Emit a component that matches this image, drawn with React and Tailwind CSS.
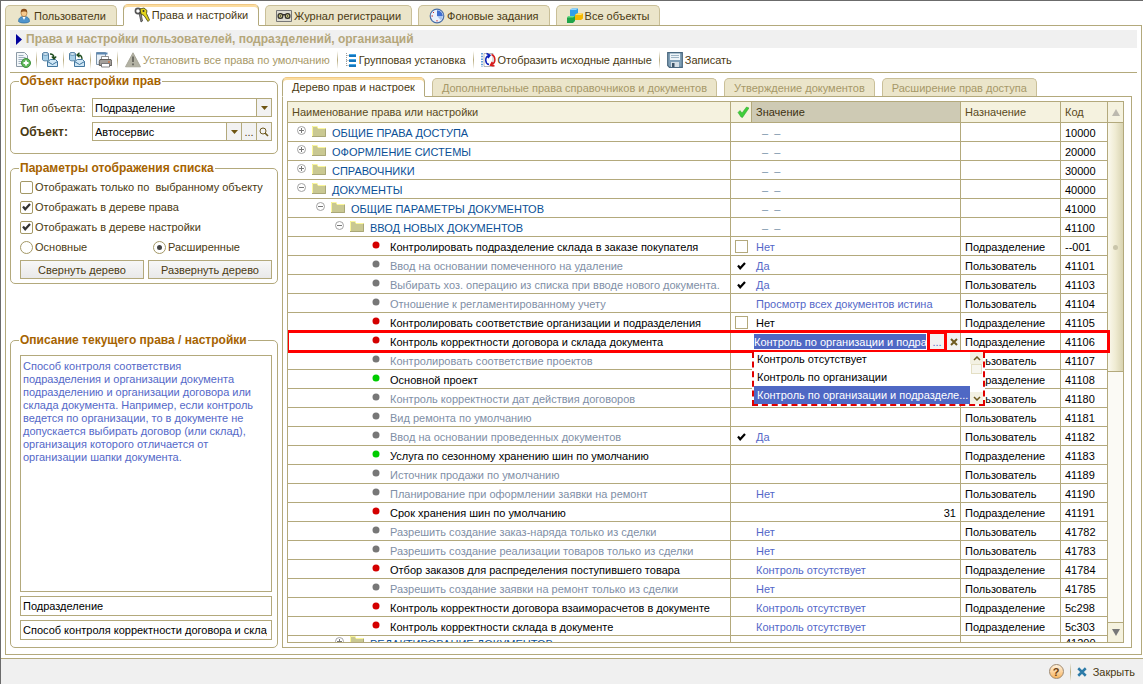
import React, { useState } from 'react';
import clsx from 'clsx';

const ROWS = [
  { level: 0, open: false, name: 'ОБЩИЕ ПРАВА ДОСТУПА', code: '10000' },
  { level: 0, open: false, name: 'ОФОРМЛЕНИЕ СИСТЕМЫ', code: '20000' },
  { level: 0, open: false, name: 'СПРАВОЧНИКИ', code: '30000' },
  { level: 0, open: true, name: 'ДОКУМЕНТЫ', code: '40000' },
  { level: 1, open: true, name: 'ОБЩИЕ ПАРАМЕТРЫ ДОКУМЕНТОВ', code: '41000' },
  { level: 2, open: true, name: 'ВВОД НОВЫХ ДОКУМЕНТОВ', code: '41100' },
  { dot: 'red', name: 'Контролировать подразделение склада в заказе покупателя', check: false, value: 'Нет', target: 'Подразделение', code: '--001' },
  { dot: 'gray', name: 'Ввод на основании помеченного на удаление', check: true, value: 'Да', target: 'Пользователь', code: '41101' },
  { dot: 'gray', name: 'Выбирать хоз. операцию из списка при вводе нового документа.', check: true, value: 'Да', target: 'Пользователь', code: '41103' },
  { dot: 'gray', name: 'Отношение к регламентированному учету', value: 'Просмотр всех документов истина', target: 'Пользователь', code: '41104' },
  { dot: 'red', name: 'Контролировать соответствие организации и подразделения', check: false, value: 'Нет', dark: true, target: 'Подразделение', code: '41105' },
  { dot: 'red', name: 'Контроль корректности договора и склада документа', editing: true, target: 'Подразделение', code: '41106' },
  { dot: 'gray', name: 'Контролировать соответствие проектов', target: 'Пользователь', code: '41107' },
  { dot: 'green', name: 'Основной проект', target: 'Подразделение', code: '41108' },
  { dot: 'gray', name: 'Контроль корректности дат действия договоров', target: 'Пользователь', code: '41180' },
  { dot: 'gray', name: 'Вид ремонта по умолчанию', target: 'Пользователь', code: '41181' },
  { dot: 'gray', name: 'Ввод на основании проведенных документов', check: true, value: 'Да', target: 'Пользователь', code: '41182' },
  { dot: 'green', name: 'Услуга по сезонному хранению шин по умолчанию', target: 'Подразделение', code: '41183' },
  { dot: 'gray', name: 'Источник продажи по умолчанию', target: 'Пользователь', code: '41189' },
  { dot: 'gray', name: 'Планирование при оформлении заявки на ремонт', value: 'Нет', target: 'Пользователь', code: '41190' },
  { dot: 'red', name: 'Срок хранения шин по умолчанию', value: '31', dark: true, number: true, target: 'Подразделение', code: '41191' },
  { dot: 'gray', name: 'Разрешить создание заказ-наряда только из сделки', value: 'Нет', target: 'Пользователь', code: '41782' },
  { dot: 'gray', name: 'Разрешить создание реализации товаров только из сделки', value: 'Нет', target: 'Пользователь', code: '41783' },
  { dot: 'red', name: 'Отбор заказов для распределения поступившего товара', value: 'Контроль отсутствует', target: 'Подразделение', code: '41784' },
  { dot: 'gray', name: 'Разрешить создание заявки на ремонт только из сделки', value: 'Нет', target: 'Пользователь', code: '41785' },
  { dot: 'red', name: 'Контроль корректности договора взаиморасчетов в документе', value: 'Контроль отсутствует', target: 'Подразделение', code: '5с298' },
  { dot: 'red', name: 'Контроль корректности склада в документе', value: 'Контроль отсутствует', target: 'Подразделение', code: '5с303' },
  { level: 2, open: false, last: true, name: 'РЕДАКТИРОВАНИЕ ДОКУМЕНТОВ', code: '41200' },
];

const DOTS = { red: '#d40000', gray: '#777777', green: '#00cc00' };
const LEVEL_PAD = ['pl-[9px]', 'pl-[28px]', 'pl-[47px]'];
const DESCRIPTION =
  'Способ контроля соответствия подразделения и организации документа подразделению и организации договора или склада документа. Например, если контроль ведется по организации, то в документе не допускается выбирать договор (или склад), организация которого отличается от организации шапки документа.';

/* ---------- icons ---------- */

function Icon({ children, w = 16, h = 16, className }) {
  return (
    <svg width={w} height={h} viewBox={`0 0 ${w} ${h}`} className={clsx('shrink-0', className)} aria-hidden="true">
      {children}
    </svg>
  );
}

const UserIcon = () => (
  <Icon>
    <path d="M2.500 13.500c0-3 1.500-5 5.500-5s5.500 2 5.500 5c-2 2-9 2-11 0z" fill="#4f94cc" stroke="#2d6b9e" strokeWidth=".7" />
    <path d="M6.500 9l1.500 3 1.500-3z" fill="#fff" />
    <ellipse cx="8" cy="5" rx="3" ry="3.600" fill="#f6c98d" stroke="#a86a28" strokeWidth=".6" />
    <path d="M4.800 4.600C4.600 1.800 6 .8 8 .8s3.400 1 3.200 3.800C10.200 3.200 6.500 3 4.800 4.600z" fill="#8a4f1c" />
  </Icon>
);

const KeysIcon = () => (
  <Icon>
    <circle cx="4" cy="4" r="2.600" fill="none" stroke="#555" strokeWidth="1.600" />
    <path d="M5 6l2 9 1.500-1L7 6z" fill="#888" stroke="#333" strokeWidth=".7" />
    <path d="M6 2l4-1 3 2.500-.5 3L15.500 13l-1.500 1.500-4-6L7 7z" fill="#e2d31c" stroke="#3b3b10" strokeWidth=".8" />
    <circle cx="9.500" cy="4" r="1" fill="#333" />
  </Icon>
);

const TapeIcon = () => (
  <Icon>
    <path d="M.5 2.500h15v11H.5z" fill="#dedcd2" stroke="#777" />
    <rect x="1.500" y="5" width="5.800" height="6" rx="2.500" fill="#34322c" />
    <rect x="8.700" y="5" width="5.800" height="6" rx="2.500" fill="#34322c" />
    <path d="M5 6h6v1.500H5z" fill="#34322c" />
    <circle cx="4.400" cy="8" r="1.700" fill="#d8d38a" />
    <circle cx="11.600" cy="8" r="1.700" fill="#d8d38a" />
    <circle cx="4.400" cy="8" r=".7" fill="#222" />
    <circle cx="11.600" cy="8" r=".7" fill="#222" />
  </Icon>
);

const ClockIcon = () => (
  <Icon>
    <circle cx="8" cy="8" r="6.800" fill="#eaf2fc" stroke="#4a6fa8" strokeWidth="1.200" />
    <path d="M8 8V2.200A5.800 5.800 0 0 1 13.800 8z" fill="#3f6fd0" />
    <path d="M8 8h5.800A5.800 5.800 0 0 1 12 12.200z" fill="#a8c4ee" />
    <path d="M2.500 8h1.500M8 12v1.500M4 4l1 1" stroke="#c33" />
  </Icon>
);

const CubesIcon = () => (
  <Icon>
    <path d="M3 2l2-1.500h6v6L9 8H3z" fill="#2f9fe8" />
    <path d="M3 2l2-1.500h6L9 2z" fill="#8fd4ff" />
    <path d="M8 7l2-1.500h6v5L14 12H8z" fill="#f5b800" />
    <path d="M8 7l2-1.500h6L14 7z" fill="#ffe06a" />
    <path d="M0 9.500L1.500 8H8v5l-2 2H0z" fill="#1fa54a" />
    <path d="M0 9.500L1.500 8H8L6 9.500z" fill="#6fe08a" />
  </Icon>
);

const AddIcon = () => (
  <Icon>
    <path d="M1.500.5h8l3 3v11h-11z" fill="#f3f7fa" stroke="#8c9aa6" />
    <path d="M3.500 3.500h5M3.500 5.500h7M3.500 7.500h6M3.500 9.500h4M3.500 11.500h3" stroke="#9fb0bf" />
    <circle cx="11" cy="11" r="4.500" fill="#5fb85a" stroke="#3f8f3c" />
    <path d="M11 8.500v5M8.500 11h5" stroke="#fff" strokeWidth="1.800" />
  </Icon>
);

function TransferIcon({ back }) {
  return (
    <Icon>
      <path d="M.5 2c0-2 6-2 6 0v5.500c0 1.800-6 1.800-6 0z" fill="#a9d0e8" stroke="#3d6f96" strokeWidth=".9" />
      <ellipse cx="3.500" cy="2" rx="3" ry="1.300" fill="#e3f3fb" stroke="#3d6f96" strokeWidth=".7" />
      <path d="M5.500 9.500l3-2h5l2 2v5h-10z" fill="#cfe6f5" stroke="#2f6893" strokeWidth=".9" />
      <path d="M5.500 9.500l5 3 5-3" fill="none" stroke="#2f6893" strokeWidth=".9" />
      {back ? (
        <path d="M13 7c0-3-1-4-4-4M10.500.8L8 3l2.500 2.200" fill="none" stroke="#1f4d1f" strokeWidth="1.300" />
      ) : (
        <path d="M8 2c3 0 4 1 4 4M9.800 4.500L12 7l2.200-2.500" fill="none" stroke="#1f4d1f" strokeWidth="1.300" />
      )}
    </Icon>
  );
}

const PrintIcon = () => (
  <Icon>
    <path d="M.5.5h9v12h-9z" fill="#e8f0f7" stroke="#7d95ab" />
    <path d="M.5 1.500h11" stroke="#5b86b0" strokeWidth="2" />
    <path d="M5.500 4.500h7V9h-7z" fill="#fff" stroke="#777" strokeWidth=".8" />
    <path d="M4 7.500h11l.7 2v4H3.300v-4z" fill="#a4a09b" stroke="#55514d" strokeWidth=".9" />
    <path d="M5.500 11.500h8v3.500h-8z" fill="#fff" stroke="#666" strokeWidth=".8" />
    <path d="M12 10h2" stroke="#e06020" />
  </Icon>
);

const WarnIcon = () => (
  <Icon>
    <path d="M8 .8l7.500 14H.5z" fill="#b3b2a4" stroke="#a5a495" strokeWidth=".9" strokeLinejoin="round" />
    <path d="M8 4.500V10M8 11.500v1.800" stroke="#6e6d64" strokeWidth="2" />
  </Icon>
);

const TreeIcon = () => (
  <Icon w={12} h={14}>
    <path d="M1.500 0v13M1.500 2.500h3M1.500 7.500h3M1.500 12.500h3" stroke="#9a9a9a" strokeDasharray="1 1" fill="none" />
    <path d="M4 1h7v3H4zM4 6h7v3H4zM4 11h7v3H4z" fill="#1476bd" />
    <path d="M4 1h7v1H4zM4 6h7v1H4zM4 11h7v1H4z" fill="#49a8e6" />
  </Icon>
);

const RefreshIcon = () => (
  <Icon w={15}>
    <path d="M3 1.500h9v13H3z" fill="#fff" stroke="#999" strokeWidth=".7" />
    <path d="M1 1v14" stroke="#3a86d0" strokeWidth="1.500" strokeDasharray="1.500 1.200" />
    <path d="M8 12.500C3.800 11.500 3.500 5 8 3.500M5.500 1.500L9 3.200 7 6.200" fill="none" stroke="#0a1fb8" strokeWidth="1.500" />
    <path d="M10.500 2.500c4.500 2 4.500 8.500 0 10M13.500 14l-4-.8 1.800-3.400" fill="none" stroke="#d81a1a" strokeWidth="1.500" />
  </Icon>
);

const SaveIcon = () => (
  <Icon>
    <path d="M.7.700h14.600v14.600H2.500L.7 13.500z" fill="#7f9fb6" stroke="#4a687f" strokeWidth="1.200" />
    <path d="M3 1.500h10V8H3z" fill="#eef4f8" />
    <path d="M4 3.500h8M4 5.500h8" stroke="#9eb4c4" />
    <path d="M4 10h8v5H4z" fill="#d5dfe6" />
    <path d="M5 11h2.500v4H5z" fill="#3d5468" />
  </Icon>
);

const FolderIcon = () => (
  <Icon w={14} h={12}>
    <path d="M0 1h5l1 2h8v9H0z" fill="#c9c892" />
    <path d="M.5 11V1.500h4.500l1 2h7.500" fill="none" stroke="#fbf79a" />
    <path d="M0 11.500h13.500V4" fill="none" stroke="#a9a777" />
  </Icon>
);

function ExpanderIcon({ open }) {
  return (
    <Icon w={9} h={9}>
      <circle cx="4.500" cy="4.500" r="4" fill="#fff" stroke="#a3a3a3" />
      <path d={open ? 'M2 4.500h5' : 'M2 4.500h5M4.500 2v5'} stroke="#777" />
    </Icon>
  );
}

const TickIcon = ({ className }) => (
  <Icon w={9} h={8} className={className}>
    <path d="M1 3.500l2.200 2.700L8 1" fill="none" stroke="currentColor" strokeWidth="2.200" />
  </Icon>
);

const GreenCheckIcon = () => (
  <Icon w={12} h={12}>
    <path d="M1 6.500l2-2L5 7l4.500-6L12 2 5.500 11.500 4 11z" fill="#3fce3a" stroke="#2a9f2a" strokeWidth=".5" />
  </Icon>
);

const DownIcon = () => (
  <Icon w={7} h={4}>
    <path d="M0 0h7L3.500 4z" fill="#6e5512" />
  </Icon>
);

const LensIcon = () => (
  <Icon w={10} h={10}>
    <circle cx="4" cy="4" r="3" fill="none" stroke="#6e5a20" />
    <path d="M6 6l3 3" stroke="#6e5a20" strokeWidth="1.600" />
  </Icon>
);

const CrossIcon = ({ color, size = 8 }) => (
  <svg width={size} height={size} viewBox="0 0 8 8" className="shrink-0" aria-hidden="true">
    <path d="M1 1l6 6M7 1L1 7" stroke={color} strokeWidth="2" />
  </svg>
);

const ChevronIcon = ({ up }) => (
  <Icon w={8} h={5}>
    <path d={up ? 'M1 4l3-3 3 3' : 'M1 1l3 3 3-3'} fill="none" stroke="#6e5a20" strokeWidth="1.500" />
  </Icon>
);

/* ---------- small parts ---------- */

function Tab({ active, dim, icon, small, children }) {
  return (
    <button
      type="button"
      role="tab"
      aria-selected={!!active}
      className={clsx(
        'flex items-center gap-[2px] whitespace-nowrap rounded-t-[5px] border',
        small ? 'h-[18px] px-[9px]' : 'h-5 px-[10px]',
        active
          ? 'relative z-10 -mb-px box-content border-[#b3a97c] border-b-white border-t-[#f0c884] bg-white shadow-[inset_0_2px_0_#fbdc9f]'
          : 'border-b-0 border-[#c9bf98] bg-[#ebe5ca]',
        dim ? 'text-[#a69868]' : 'text-[#4a3a12]'
      )}
    >
      {icon}
      <span>{children}</span>
    </button>
  );
}

function ToolButton({ icon, label, children, disabled }) {
  return (
    <button
      type="button"
      aria-label={label}
      disabled={disabled}
      className={clsx(
        'flex h-5 items-center gap-[2px] whitespace-nowrap',
        children && 'px-[2px]',
        disabled ? 'text-[#a69868]' : 'text-[#4a3a12]'
      )}
    >
      {icon}
      {children && <span>{children}</span>}
    </button>
  );
}

const Separator = () => <span className="h-[18px] w-px bg-linear-to-b from-transparent via-[#b8ac80] to-transparent" />;

function Group({ title, className, children }) {
  return (
    <fieldset className={clsx('min-w-0 rounded-[5px] border border-[#b3a97c] pr-[5px] pl-[9px]', className)}>
      <legend className="-ml-px whitespace-nowrap px-px text-xs leading-[14px] font-bold text-[#a66300]">{title}</legend>
      {children}
    </fieldset>
  );
}

function CheckOption({ defaultChecked, children }) {
  return (
    <label className="flex h-5 items-center gap-[2px] whitespace-pre">
      <span className="grid place-items-center">
        <input
          type="checkbox"
          defaultChecked={defaultChecked}
          className="peer col-start-1 row-start-1 size-[13px] appearance-none rounded-[2px] border border-[#a39866] bg-white"
        />
        <TickIcon className="pointer-events-none col-start-1 row-start-1 hidden text-[#333] peer-checked:block" />
      </span>
      {children}
    </label>
  );
}

function RadioOption({ defaultChecked, children }) {
  return (
    <label className="flex h-5 flex-1 items-center gap-[2px]">
      <span className="grid place-items-center">
        <input
          type="radio"
          name="detail"
          defaultChecked={defaultChecked}
          className="peer col-start-1 row-start-1 size-[13px] appearance-none rounded-full border border-[#a39866] bg-white"
        />
        <span className="pointer-events-none col-start-1 row-start-1 hidden size-[5px] rounded-full bg-[#444] peer-checked:block" />
      </span>
      {children}
    </label>
  );
}

const PushButton = ({ children }) => (
  <button type="button" className="h-[19px] flex-1 border border-[#b3a97c] bg-linear-to-b from-[#f7f7f7] to-[#e9e9e9] whitespace-nowrap">
    {children}
  </button>
);

const FieldButton = ({ label, children }) => (
  <button type="button" aria-label={label} className="flex w-[15px] shrink-0 items-center justify-center border-l border-[#b3a97c] bg-[#f2f2f2]">
    {children}
  </button>
);

/* ---------- value editor with its drop-down list ---------- */

function ValueEditor() {
  const [picked, setPicked] = useState(2);
  const options = ['Контроль отсутствует', 'Контроль по организации', 'Контроль по организации и подразделе...'];

  return (
    <div className="relative flex h-[17px] items-stretch pl-[2px]">
      <input
        type="text"
        aria-label="Значение"
        defaultValue="Контроль по организации и подразделению"
        className="my-px min-w-0 flex-1 bg-[#4f68c4] text-white"
      />
      <button type="button" aria-label="Выбрать" className="-my-[2px] ml-px w-5 border-[3px] border-[#f00] bg-[#f2f2f2] leading-3">
        ...
      </button>
      <button type="button" aria-label="Очистить" className="flex w-[13px] items-center justify-center bg-[#f2f2f2]">
        <CrossIcon color="#6e5a20" />
      </button>

      <div className="absolute top-[19px] left-0 z-20 flex w-[233px] border-2 border-t-0 border-dashed border-[#e00000] bg-white">
        <ul className="min-w-0 flex-1">
          {options.map((o, i) => (
            <li key={o} className="first:-mt-[2px]">
              <button
                type="button"
                onClick={() => setPicked(i)}
                className={clsx('block h-[18px] w-full whitespace-nowrap pl-[3px] text-left', picked === i ? 'bg-[#4f68c4] text-white' : 'text-black')}
              >
                {o}
              </button>
            </li>
          ))}
        </ul>
        <div className="flex w-[13px] flex-col items-center justify-between bg-white">
          <span className="flex h-3 w-full items-center justify-center bg-[#f3f1e3]"><ChevronIcon up /></span>
          <span className="mb-auto h-[10px] w-[11px] border border-[#e4dfc4] bg-[#f7f6ef]" />
          <span className="flex h-3 w-full items-center justify-center bg-[#f3f1e3]"><ChevronIcon /></span>
        </div>
      </div>
    </div>
  );
}

function TreeRow({ row }) {
  const folder = row.level !== undefined;
  return (
    <tr
      className={clsx(
        'h-[19px] *:border-b *:border-[#b3a97c] *:p-0',
        row.last ? '*:align-top' : '*:pt-px',
        row.editing && 'relative z-10 outline-[3px] -outline-offset-1 outline-[#f00]'
      )}
    >
      <td className="border-r">
        {folder ? (
          <div className={clsx('flex items-center', row.last ? 'h-[14px]' : 'h-[17px]', LEVEL_PAD[row.level])}>
            <span className="-mt-1"><ExpanderIcon open={row.open} /></span>
            <span className="-mt-1 mr-[6px] ml-[6px]"><FolderIcon /></span>
            <span className="pt-px whitespace-nowrap text-[#0a4f96]">{row.name}</span>
          </div>
        ) : (
          <div className="flex h-[17px] items-center pl-[84px]">
            <Icon w={8} h={8} className="-mt-1">
              <circle cx="4" cy="4" r="3.500" fill={DOTS[row.dot]} />
            </Icon>
            <span className={clsx('pl-[10px] whitespace-nowrap', row.dot === 'gray' ? 'text-[#7f8fa6]' : 'text-black')}>{row.name}</span>
          </div>
        )}
      </td>
      <td className="!pl-1 align-middle">
        {row.check === true && <TickIcon className="ml-[2px] text-black" />}
        {row.check === false && (
          <input type="checkbox" aria-label={row.name} className="block size-[13px] appearance-none border border-[#b3a97c] bg-white" />
        )}
      </td>
      <td className={clsx('border-r', !row.editing && '!px-1', row.number && 'text-right', row.dark ? 'text-black' : 'text-[#5468c8]')}>
        {folder && !row.last && <span className="pl-[6px] whitespace-pre text-[#7892a8]">–  –</span>}
        {row.editing ? <ValueEditor /> : row.value}
      </td>
      <td className="border-r !pl-1 text-black">{row.target}</td>
      <td className="border-r !pl-1 text-black">{row.code}</td>
    </tr>
  );
}

function RightsTable() {
  return (
    <div className="flex min-h-0 flex-1 overflow-hidden border border-[#b3a97c]">
      <div className="min-w-0 flex-1">
        <table className="w-full table-fixed border-separate border-spacing-0">
          <colgroup>
            <col />
            <col className="w-[21px]" />
            <col className="w-[209px]" />
            <col className="w-[100px]" />
            <col className="w-[47px]" />
          </colgroup>
          <thead>
            <tr className="h-[21px] bg-[#f5f2df] text-left text-[#5a4a1c] *:border-r *:border-b *:border-[#b3a97c] *:p-0 *:font-normal">
              <th className="!pl-1">Наименование права или настройки</th>
              <th className="!pl-[6px]" aria-label="Отметка"><GreenCheckIcon /></th>
              <th className="bg-[#cecab4] !pl-1 text-[#3c3010]">Значение</th>
              <th className="!pl-1">Назначение</th>
              <th className="!pl-1">Код</th>
            </tr>
          </thead>
          <tbody>
            {ROWS.map((row) => <TreeRow key={row.code} row={row} />)}
          </tbody>
        </table>
      </div>

      {/* scroll bar */}
      <div className="flex w-[15px] flex-col bg-[#fbfaf5]">
        <button type="button" aria-label="Вверх" className="flex h-[21px] items-center justify-center border-b border-[#b3a97c] bg-[#f5f2df]">
          <Icon w={8} h={7}><path d="M0 7h8L4 0z" fill="#bcb9ae" /></Icon>
        </button>
        <div className="flex h-[249px] items-center justify-center border-b border-[#b3a97c] bg-linear-to-r from-[#fbf9ee] via-[#efebd2] to-[#d9d4b2]">
          <span className="size-[5px] rounded-full bg-[#c9c5aa]" />
        </div>
        <button type="button" aria-label="Вниз" className="mt-auto flex h-5 items-center justify-center border-t border-[#b3a97c] bg-[#f5f2df]">
          <Icon w={8} h={7}><path d="M0 0h8L4 7z" fill="#777" /></Icon>
        </button>
      </div>
    </div>
  );
}

function LeftColumn() {
  const box = 'w-full border border-[#b3a97c] bg-white pl-[2px]';
  return (
    <div className="flex w-[268px] shrink-0 flex-col pt-px">
      <Group title="Объект настройки прав" className="pb-3">
        <div className="grid grid-cols-[72px_minmax(0,1fr)] items-center gap-y-[5px] pt-[10px]">
          <label htmlFor="kind">Тип объекта:</label>
          <div className="flex h-[19px] border border-[#b3a97c]">
            <select id="kind" className="min-w-0 flex-1 appearance-none px-[2px] text-black">
              <option>Подразделение</option>
            </select>
            <span className="flex w-[15px] items-center justify-center border-l border-[#b3a97c] bg-[#f2f2f2]"><DownIcon /></span>
          </div>
          <label htmlFor="object" className="text-xs font-bold">Объект:</label>
          <div className="flex h-[19px] border border-[#b3a97c]">
            <input id="object" defaultValue="Автосервис" className="min-w-0 flex-1 px-[2px] text-black" />
            <FieldButton label="Список"><DownIcon /></FieldButton>
            <FieldButton label="Выбрать">...</FieldButton>
            <FieldButton label="Открыть"><LensIcon /></FieldButton>
          </div>
        </div>
      </Group>

      <Group title="Параметры отображения списка" className="mt-[7px] pb-1">
        <div className="flex flex-col pt-[2px]">
          <CheckOption>Отображать только по  выбранному объекту</CheckOption>
          <CheckOption defaultChecked>Отображать в дереве права</CheckOption>
          <CheckOption defaultChecked>Отображать в дереве настройки</CheckOption>
          <div className="flex gap-[14px]">
            <RadioOption>Основные</RadioOption>
            <RadioOption defaultChecked>Расширенные</RadioOption>
          </div>
          <div className="mt-[3px] flex gap-1">
            <PushButton>Свернуть дерево</PushButton>
            <PushButton>Развернуть дерево</PushButton>
          </div>
        </div>
      </Group>

      <Group title="Описание текущего права / настройки" className="mt-[49px] flex-1 pb-[7px]">
        <div className="flex h-full flex-col gap-1 pt-2">
          <textarea
            aria-label="Описание"
            readOnly
            defaultValue={DESCRIPTION}
            className={clsx(box, 'min-h-0 flex-1 resize-none pt-1 pr-[14px] leading-[13px] text-[#5468c8]')}
          />
          <input aria-label="Назначение" readOnly defaultValue="Подразделение" className={clsx(box, 'h-5 shrink-0 pr-1 text-black')} />
          <input
            aria-label="Имя настройки"
            readOnly
            defaultValue="Способ контроля корректности договора и склада документа"
            className={clsx(box, 'h-5 shrink-0 pr-1 text-black')}
          />
        </div>
      </Group>
    </div>
  );
}

export default function App() {
  return (
    <div className="flex h-screen min-h-[600px] flex-col overflow-hidden border-t border-l border-[#6b6b6b] bg-white font-['Liberation_Sans',Arial,sans-serif] text-[11px] leading-[14px] text-[#4a3a12]">
      <div className="flex min-h-0 flex-1 flex-col px-1 pt-[3px]">
        <div role="tablist" className="flex items-end gap-[6px]">
          <Tab icon={<UserIcon />}>Пользователи</Tab>
          <Tab active icon={<KeysIcon />}>Права и настройки</Tab>
          <Tab icon={<TapeIcon />}>Журнал регистрации</Tab>
          <Tab icon={<ClockIcon />}>Фоновые задания</Tab>
          <Tab icon={<CubesIcon />}>Все объекты</Tab>
        </div>

        <main className="-mr-[3px] flex min-h-0 flex-1 flex-col border border-[#b3a97c] px-1 pt-1 pb-[6px]">
          <h1 className="flex h-[18px] items-center gap-1 bg-[#f0f0f0] pl-[6px] text-xs font-bold whitespace-nowrap text-[#b5a77b]">
            <Icon w={6} h={11}><path d="M0 0l6 5.500L0 11z" fill="#00009c" /></Icon>
            Права и настройки пользователей, подразделений, организаций
          </h1>

          <div className="flex h-[25px] shrink-0 items-center gap-[5px] border-b border-[#b3a97c] pl-[5px]">
            <ToolButton label="Добавить" icon={<AddIcon />} />
            <Separator />
            <ToolButton label="Выгрузить" icon={<TransferIcon />} />
            <Separator />
            <ToolButton label="Загрузить" icon={<TransferIcon back />} />
            <Separator />
            <ToolButton label="Печать" icon={<PrintIcon />} />
            <Separator />
            <ToolButton disabled icon={<WarnIcon />}>Установить все права по умолчанию</ToolButton>
            <Separator />
            <ToolButton icon={<TreeIcon />}>Групповая установка</ToolButton>
            <Separator />
            <ToolButton icon={<RefreshIcon />}>Отобразить исходные данные</ToolButton>
            <Separator />
            <ToolButton icon={<SaveIcon />}>Записать</ToolButton>
          </div>

          <div className="flex min-h-0 flex-1 gap-1">
            <LeftColumn />
            <div className="mr-[5px] flex min-w-0 flex-1 flex-col pt-1">
              <div role="tablist" className="flex items-end gap-[7px]">
                <Tab small active>Дерево прав и настроек</Tab>
                <Tab small dim>Дополнительные права справочников и документов</Tab>
                <Tab small dim>Утверждение документов</Tab>
                <Tab small dim>Расширение прав доступа</Tab>
              </div>
              <div className="flex min-h-0 flex-1 flex-col border border-[#b3a97c] py-1 pr-[7px] pl-1">
                <RightsTable />
              </div>
            </div>
          </div>
        </main>
      </div>

      <footer className="mt-[3px] flex h-[26px] shrink-0 items-center justify-end gap-[6px] border-t border-[#b3a97c] bg-[#f0f0f0] pr-2">
        <button type="button" aria-label="Справка" className="size-[15px] rounded-full border border-[#a08a70] bg-linear-to-b from-[#fff2dc] to-[#f7b45c] text-[11px] leading-3 font-bold text-[#6b3f12]">?</button>
        <Separator />
        <button type="button" className="flex items-center gap-[6px]">
          <CrossIcon color="#2d7ba8" size={10} />
          Закрыть
        </button>
      </footer>
    </div>
  );
}
